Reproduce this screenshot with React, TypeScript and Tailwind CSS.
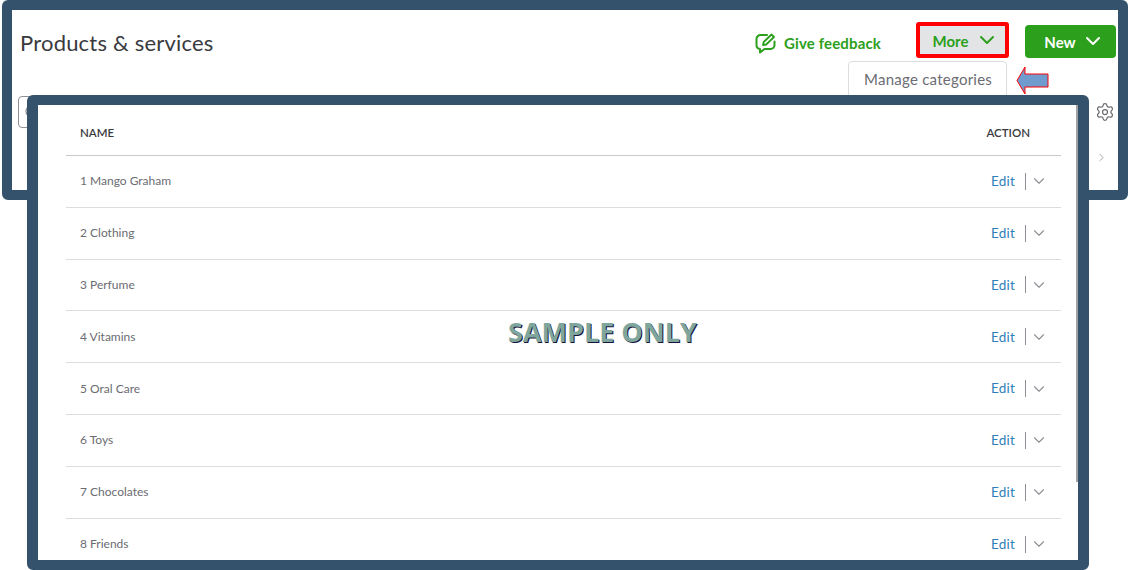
import { ChevronDown, ChevronRight, Search, Settings } from 'lucide-react';

const categories = ['1 Mango Graham', '2 Clothing', '3 Perfume', '4 Vitamins', '5 Oral Care', '6 Toys', '7 Chocolates', '8 Friends'];

function FeedbackIcon() {
  return (
    <svg width="21" height="21" viewBox="0 0 21 21" fill="none" stroke="#2ca01c" strokeWidth="2" strokeLinecap="round" strokeLinejoin="round">
      <path d="M12 2H5.5A4 4 0 0 0 1.5 6v6a4 4 0 0 0 3.5 4v3.5L9.5 16h6a4 4 0 0 0 4-4V8.5" />
      <path d="M8 12l.7-3L16.5 1.5l2.5 2.5-7.8 7.5z" strokeWidth="1.8" />
    </svg>
  );
}

function CalloutArrow() {
  return (
    <svg width="33" height="29" viewBox="0 0 33 29" className="block">
      <path d="M1 14.5 L9 1 L9 8 L32 8 L32 21 L9 21 L9 28 Z" fill="#6f9bce" stroke="#ff0000" strokeWidth="1" />
    </svg>
  );
}

export default function App() {
  return (
    <div className="relative h-[570px] w-[1128px] overflow-hidden bg-white font-['Lato',sans-serif]">
      {/* products page behind */}
      <div className="absolute left-[2px] top-0 h-[200px] w-[1126px] rounded-md border-[10px] border-[#34526b] bg-white">
        <div className="flex h-[66px] items-center pl-2 pr-[2px]">
          <h1 className="-translate-y-px text-[22px] font-normal tracking-[0.2px] text-[#393a3d]">Products &amp; services</h1>
          <a className="ml-auto flex items-center gap-2 text-[15px] font-bold tracking-[0.15px] text-[#2ca01c]">
            <FeedbackIcon />
            Give feedback
          </a>
          <button className="ml-[35px] flex h-9 w-[93px] -translate-y-[3px] items-center justify-center gap-[7px] rounded-[3px] border-4 border-[#ff0000] bg-[#e3e4e6] pl-[7px] text-[15px] font-bold text-[#2ca01c]">
            <span className="translate-y-px">More</span>
            <ChevronDown size={24} strokeWidth={2} />
          </button>
          <button className="ml-4 flex h-[33px] w-[91px] -translate-y-[2px] items-center justify-center gap-[5px] rounded bg-[#2ca01c] pl-2 text-[15px] font-bold text-white">
            <span className="translate-y-px">New</span>
            <ChevronDown size={24} strokeWidth={2} />
          </button>
        </div>

        <div className="mt-5 flex items-center justify-between pl-[6px] pr-[3px]">
          <div className="flex h-8 w-[200px] items-center rounded border border-[#8d9096] pl-[5px]">
            <Search size={16} className="text-[#8d9096]" />
          </div>
          <Settings size={20} strokeWidth={1.5} className="text-[#6b6c72]" />
        </div>
        <div className="mt-[23px] flex justify-end pr-[10px]">
          <ChevronRight size={13} strokeWidth={1.5} className="text-[#8d9096]" />
        </div>

        <div className="absolute left-[836px] top-[51px] h-[44px] w-[159px] rounded-t border border-[#dcdde0] bg-white pl-[15px] pt-[6px] text-[15px] tracking-[0.25px] text-[#6b6c72]">
          Manage categories
        </div>
        <div className="absolute left-[1004px] top-[56px]">
          <CalloutArrow />
        </div>
      </div>

      {/* manage categories window on top */}
      <div className="absolute left-[27px] top-[95px] h-[475px] w-[1062px] overflow-hidden rounded-md border-x-[11px] border-y-[10px] border-[#34526b] bg-white">
        <div className="absolute right-0 top-0 h-[377px] w-[2px] bg-[#a0a2a6]" />
        <div className="pl-[28px] pr-[17px]">
          <div className="flex h-[51px] items-center justify-between border-b border-[#c9cacd] pl-[14px] pr-[31px] pt-[6px] text-[11.5px] font-semibold text-[#393a3d]">
            <span>NAME</span>
            <span>ACTION</span>
          </div>
          {categories.map((name) => (
            <div key={name} className="flex h-[51.8px] items-center justify-between border-b border-[#dcdde0] pl-[14px] pr-[13px] last:border-b-0">
              <span className="text-xs text-[#6b6c72]">{name}</span>
              <div className="flex items-center">
                <span className="text-[13.5px] tracking-[0.2px] text-[#2f7fb8]">Edit</span>
                <span className="ml-[10px] h-[17px] w-px bg-[#8d9096]" />
                <ChevronDown size={18} strokeWidth={1.5} className="ml-1 text-[#8d9096]" />
              </div>
            </div>
          ))}
        </div>
      </div>

      {/* watermark */}
      <div className="absolute left-[508px] top-[314px] whitespace-nowrap font-['Open_Sans',sans-serif] text-[27px] font-bold leading-9 text-[#7fa69c] [text-shadow:1px_1px_0_#17153f]">
        SAMPLE ONLY
      </div>
    </div>
  );
}
